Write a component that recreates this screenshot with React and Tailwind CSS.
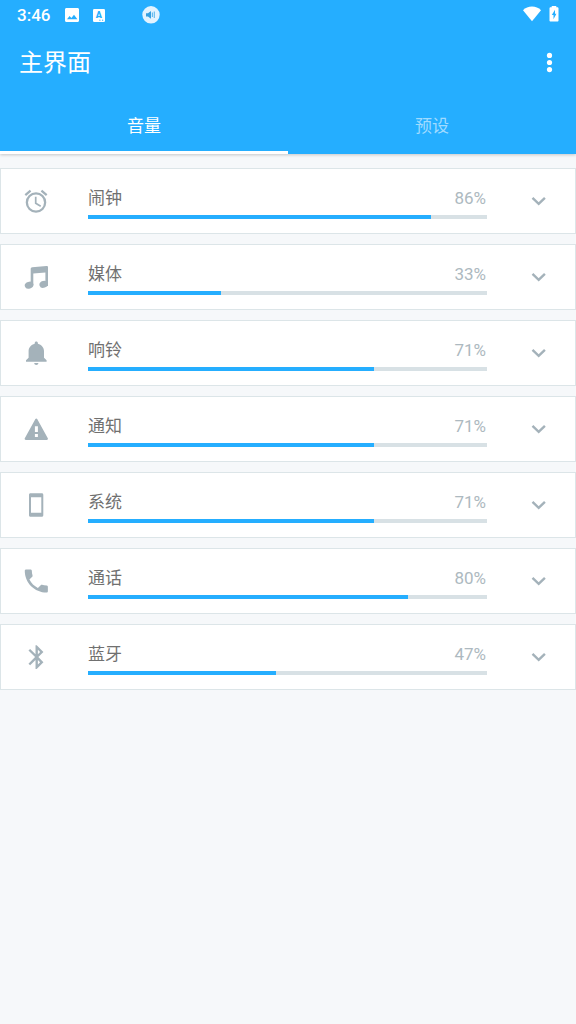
import { useState } from 'react';

const channels = [
  { id: 'alarm', label: '闹钟', value: 86, icon: AlarmIcon },
  { id: 'media', label: '媒体', value: 33.4, icon: MusicIcon },
  { id: 'ring', label: '响铃', value: 71.8, icon: BellIcon },
  { id: 'notification', label: '通知', value: 71.8, icon: WarningIcon },
  { id: 'system', label: '系统', value: 71.8, icon: PhoneDeviceIcon },
  { id: 'call', label: '通话', value: 80.2, icon: CallIcon },
  { id: 'bluetooth', label: '蓝牙', value: 47, icon: BluetoothIcon },
];

const tabs = [
  { id: 'volume', label: '音量' },
  { id: 'presets', label: '预设' },
];

function AlarmIcon() {
  return (
    <svg viewBox="1.5 1.2 21 21" className="size-6" fill="currentColor" aria-hidden="true">
      <path d="M12 20a7 7 0 1 1 0-14 7 7 0 0 1 0 14m0-16a9 9 0 1 0 0 18 9 9 0 0 0 0-18m.5 4H11v6l4.75 2.85.75-1.23-4-2.37V8M7.88 3.39L6.6 1.86 2 5.71l1.29 1.53 4.59-3.85M22 5.72l-4.6-3.86-1.29 1.53 4.6 3.86L22 5.72z" />
    </svg>
  );
}

function MusicIcon() {
  return (
    <svg viewBox="0 0 24 24" className="size-6" fill="currentColor" aria-hidden="true">
      <path d="M6.700 4c0-1.100.6-1.600 1.500-1.700L22.500.9c.9-.1 1.500.4 1.500 1.300V19h-2.600V7.400L9.300 8.600V20H6.700z" />
      <ellipse cx="5.100" cy="20.200" rx="4.400" ry="3.400" transform="rotate(-18 5.100 20.200)" />
      <ellipse cx="19.800" cy="19.300" rx="4.400" ry="3.400" transform="rotate(-18 19.800 19.300)" />
    </svg>
  );
}

function BellIcon() {
  return (
    <svg viewBox="0 0 24 24" className="size-6" fill="currentColor" aria-hidden="true">
      <path d="M14.400 22c0 1.200-1 1.900-2.100 1.900s-2.100-.7-2.100-1.900zM12.300.6c.9 0 1.600.7 1.600 1.600v.5c3.500.8 6.100 3.800 6.100 7.400v6.600l2.600 2.600v1.400H2v-1.400l2.600-2.600v-6.600c0-3.600 2.600-6.600 6.100-7.400v-.5c0-.9.7-1.600 1.600-1.600z" />
    </svg>
  );
}

function WarningIcon() {
  return (
    <svg viewBox="0 0 24 24" className="size-6" fill="currentColor" aria-hidden="true">
      <path
        fillRule="evenodd"
        d="M11.400 1.900c.4-.7 1.400-.7 1.800 0l10.600 19.300c.4.800 0 1.800-1 1.800H1.800c-1 0-1.400-1-1-1.800zM10.900 9.200v5.800h3V9.200zm0 7.700v3.200h3v-3.200z"
      />
    </svg>
  );
}

function PhoneDeviceIcon() {
  return (
    <svg viewBox="0 0 24 24" className="size-6" fill="currentColor" aria-hidden="true">
      <path fillRule="evenodd" d="M6.500.3h11.300c.9 0 1.500.6 1.500 1.500v20.500c0 .9-.6 1.500-1.500 1.500H6.500c-.9 0-1.500-.6-1.500-1.500V1.800C5 .9 5.600.3 6.500.3zM7 4.200v15.600h10.300V4.200z" />
    </svg>
  );
}

function CallIcon() {
  return (
    <svg viewBox="2.400 2.600 18.700 18.700" className="size-6" fill="currentColor" aria-hidden="true">
      <path d="M6.620 10.790c1.440 2.830 3.760 5.140 6.590 6.590l2.200-2.200c.27-.27.67-.36 1.020-.24 1.120.37 2.330.57 3.570.57.55 0 1 .45 1 1V20c0 .55-.45 1-1 1-9.390 0-17-7.610-17-17 0-.55.45-1 1-1h3.500c.55 0 1 .45 1 1 0 1.250.2 2.450.57 3.570.11.35.03.74-.25 1.020z" />
    </svg>
  );
}

function BluetoothIcon() {
  return (
    <svg viewBox="1.200 1.700 20.400 20.400" className="size-6" fill="currentColor" aria-hidden="true">
      <path d="M17.710 7.710L12 2h-1v7.590L6.410 5 5 6.410 10.590 12 5 17.590 6.410 19 11 14.410V22h1l5.710-5.710-4.300-4.290zM13 5.830l1.880 1.880L13 9.590zm1.880 10.460L13 18.170v-3.760z" />
    </svg>
  );
}

function ChevronDown() {
  return (
    <svg viewBox="0 0 24 24" className="size-6" fill="none" stroke="currentColor" strokeWidth="2.400" aria-hidden="true">
      <path d="M6.500 8.800l6.200 6 6.200-6" />
    </svg>
  );
}

function StatusBar() {
  return (
    <div className="flex h-[30px] items-center px-[17px]">
      <span className="text-[17px] leading-[30px] font-medium">3:46</span>
      <svg viewBox="0 0 14 14" className="ml-[15px] size-3.5" fill="currentColor" aria-hidden="true">
        <path fillRule="evenodd" d="M1.500 0h11C13.400 0 14 .6 14 1.500v11c0 .9-.6 1.500-1.500 1.500h-11C.6 14 0 13.400 0 12.500v-11C0 .6.600 0 1.500 0zM2 11.200h10.400L9 6.800l-2.600 3.300-1.800-2.200z" />
      </svg>
      <svg viewBox="0 0 12 13" className="ml-3.5 h-[13px] w-3" aria-hidden="true">
        <rect width="12" height="13" rx="1.200" fill="currentColor" />
        <text x="5.800" y="9" textAnchor="middle" fill="#25aeff" className="text-[9px] font-black">A</text>
        <path d="M6.300 11.200h1.200M9 11.200h1.200" stroke="#25aeff" strokeWidth="1" />
      </svg>
      <svg viewBox="0 0 18 18" className="ml-[37px] size-[18px]" aria-hidden="true">
        <circle cx="9" cy="8.800" r="8.700" fill="#e2f3ff" />
        <path d="M4 7.200h2l3-2.300v7.800l-3-2.300H4z" fill="#359fe0" />
        <path d="M10.400 6.500v4.600M12.300 5.500v6.600" stroke="#5eb8ee" strokeWidth="1.100" />
      </svg>
      <svg viewBox="0 0 18 18" className="ml-auto size-[18px]" fill="currentColor" aria-hidden="true">
        <path d="M9 15.300L0 4.200C2.400 1.900 5.500.6 9 .6s6.600 1.300 9 3.600z" />
      </svg>
      <svg viewBox="0 0 10 18" className="ml-2 h-[18px] w-2.5" fill="currentColor" aria-hidden="true">
        <path fillRule="evenodd" d="M2.700 1.200V0h4.600v1.200h1.100c.6 0 1.100.5 1.100 1.100v12.200c0 .6-.5 1.100-1.100 1.100H1.600c-.6 0-1.100-.5-1.100-1.100V2.300c0-.6.5-1.100 1.100-1.100zM6 3.700L2.800 9.100h1.700v4.200l2.900-5.500H6z" />
      </svg>
    </div>
  );
}

function VolumeCard({ channel }) {
  const Icon = channel.icon;
  const percent = Math.floor(channel.value);

  return (
    <li className="flex h-[66px] items-center border border-[#dce5e8] bg-white pr-[25px] pl-[23px] text-[#a4b2ba]">
      <Icon />
      <div className="ml-10 flex-1 pt-1">
        <div className="flex items-center justify-between text-[17px] leading-[22px]">
          <span id={channel.id} className="text-[#707070]">{channel.label}</span>
          <span className="pr-px text-[#adb9c0]">{percent}%</span>
        </div>
        <div
          role="progressbar"
          aria-labelledby={channel.id}
          aria-valuenow={percent}
          aria-valuemin={0}
          aria-valuemax={100}
          className="mt-1.5 h-1 bg-[#d8e1e5]"
        >
          <div className="h-full bg-[#25aeff]" style={{ width: `${channel.value}%` }} />
        </div>
      </div>
      <button type="button" aria-label={`展开${channel.label}`} className="ml-[39px]">
        <ChevronDown />
      </button>
    </li>
  );
}

const App = () => {
  const [activeTab, setActiveTab] = useState('volume');

  return (
    <div className="min-h-screen bg-[#f6f8fa] font-[Roboto,'Noto_Sans_CJK_SC',sans-serif]">
      {/* Header */}
      <header className="bg-[#25aeff] text-white shadow-[0_1px_3px_rgba(0,0,0,0.2)]">
        <StatusBar />
        <div className="flex h-[66px] items-center justify-between pr-[14px] pl-[19px]">
          <h1 className="text-2xl">主界面</h1>
          <button type="button" aria-label="更多选项">
            <svg viewBox="0 0 24 24" className="size-6" fill="currentColor" aria-hidden="true">
              <circle cx="11.500" cy="4.400" r="2.600" />
              <circle cx="11.500" cy="11.500" r="2.600" />
              <circle cx="11.500" cy="18.600" r="2.600" />
            </svg>
          </button>
        </div>
        <div role="tablist" className="grid h-[58px] grid-cols-2">
          {tabs.map((tab) => (
            <button
              key={tab.id}
              type="button"
              role="tab"
              aria-selected={activeTab === tab.id}
              onClick={() => setActiveTab(tab.id)}
              className={
                activeTab === tab.id
                  ? 'border-b-[3px] border-white pt-1.5 text-[17px] text-white'
                  : 'border-b-[3px] border-transparent pt-1.5 text-[17px] text-[#a0dbff]'
              }
            >
              {tab.label}
            </button>
          ))}
        </div>
      </header>

      {/* Volume channels */}
      <ul className="flex flex-col gap-2.5 pt-3.5">
        {channels.map((channel) => (
          <VolumeCard key={channel.id} channel={channel} />
        ))}
      </ul>
    </div>
  );
};

export default App;
